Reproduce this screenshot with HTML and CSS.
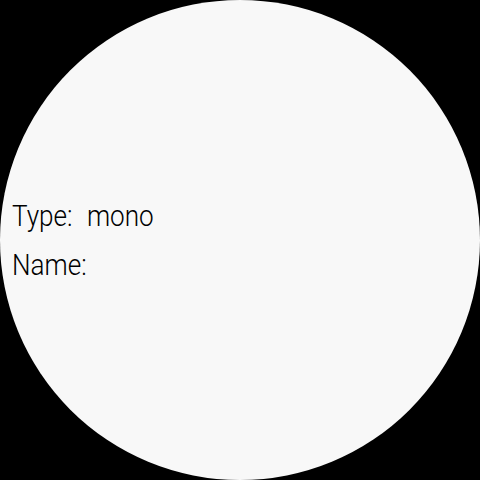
FILE: index.html
```html
<!DOCTYPE html>
<html>
<head>
<meta charset="utf-8">
<link rel="stylesheet" href="styles.css">
</head>
<body>
<div class="screen">
  <div class="info">
    <div class="row">Type:<span class="gap"></span>mono</div>
    <div class="row">Name:</div>
  </div>
</div>
</body>
</html>
```

FILE: styles.css
```css
html, body {
  margin: 0;
  padding: 0;
  background: #000;
  width: 480px;
  height: 480px;
  overflow: hidden;
}
.screen {
  width: 480px;
  height: 480px;
  border-radius: 50%;
  background: #f8f8f8;
  display: flex;
  flex-direction: column;
  justify-content: center;
  box-sizing: border-box;
  padding-left: 12px;
}
.info {
  display: flex;
  flex-direction: column;
  gap: 14px;
  font-family: "Roboto", sans-serif;
  font-weight: 300;
  font-size: 29px;
  color: #000;
  line-height: 35px;
  transform-origin: left center;
  transform: scaleX(0.9);
  margin-top: 2px;
}
.gap {
  display: inline-block;
  width: 16px;
}
```
